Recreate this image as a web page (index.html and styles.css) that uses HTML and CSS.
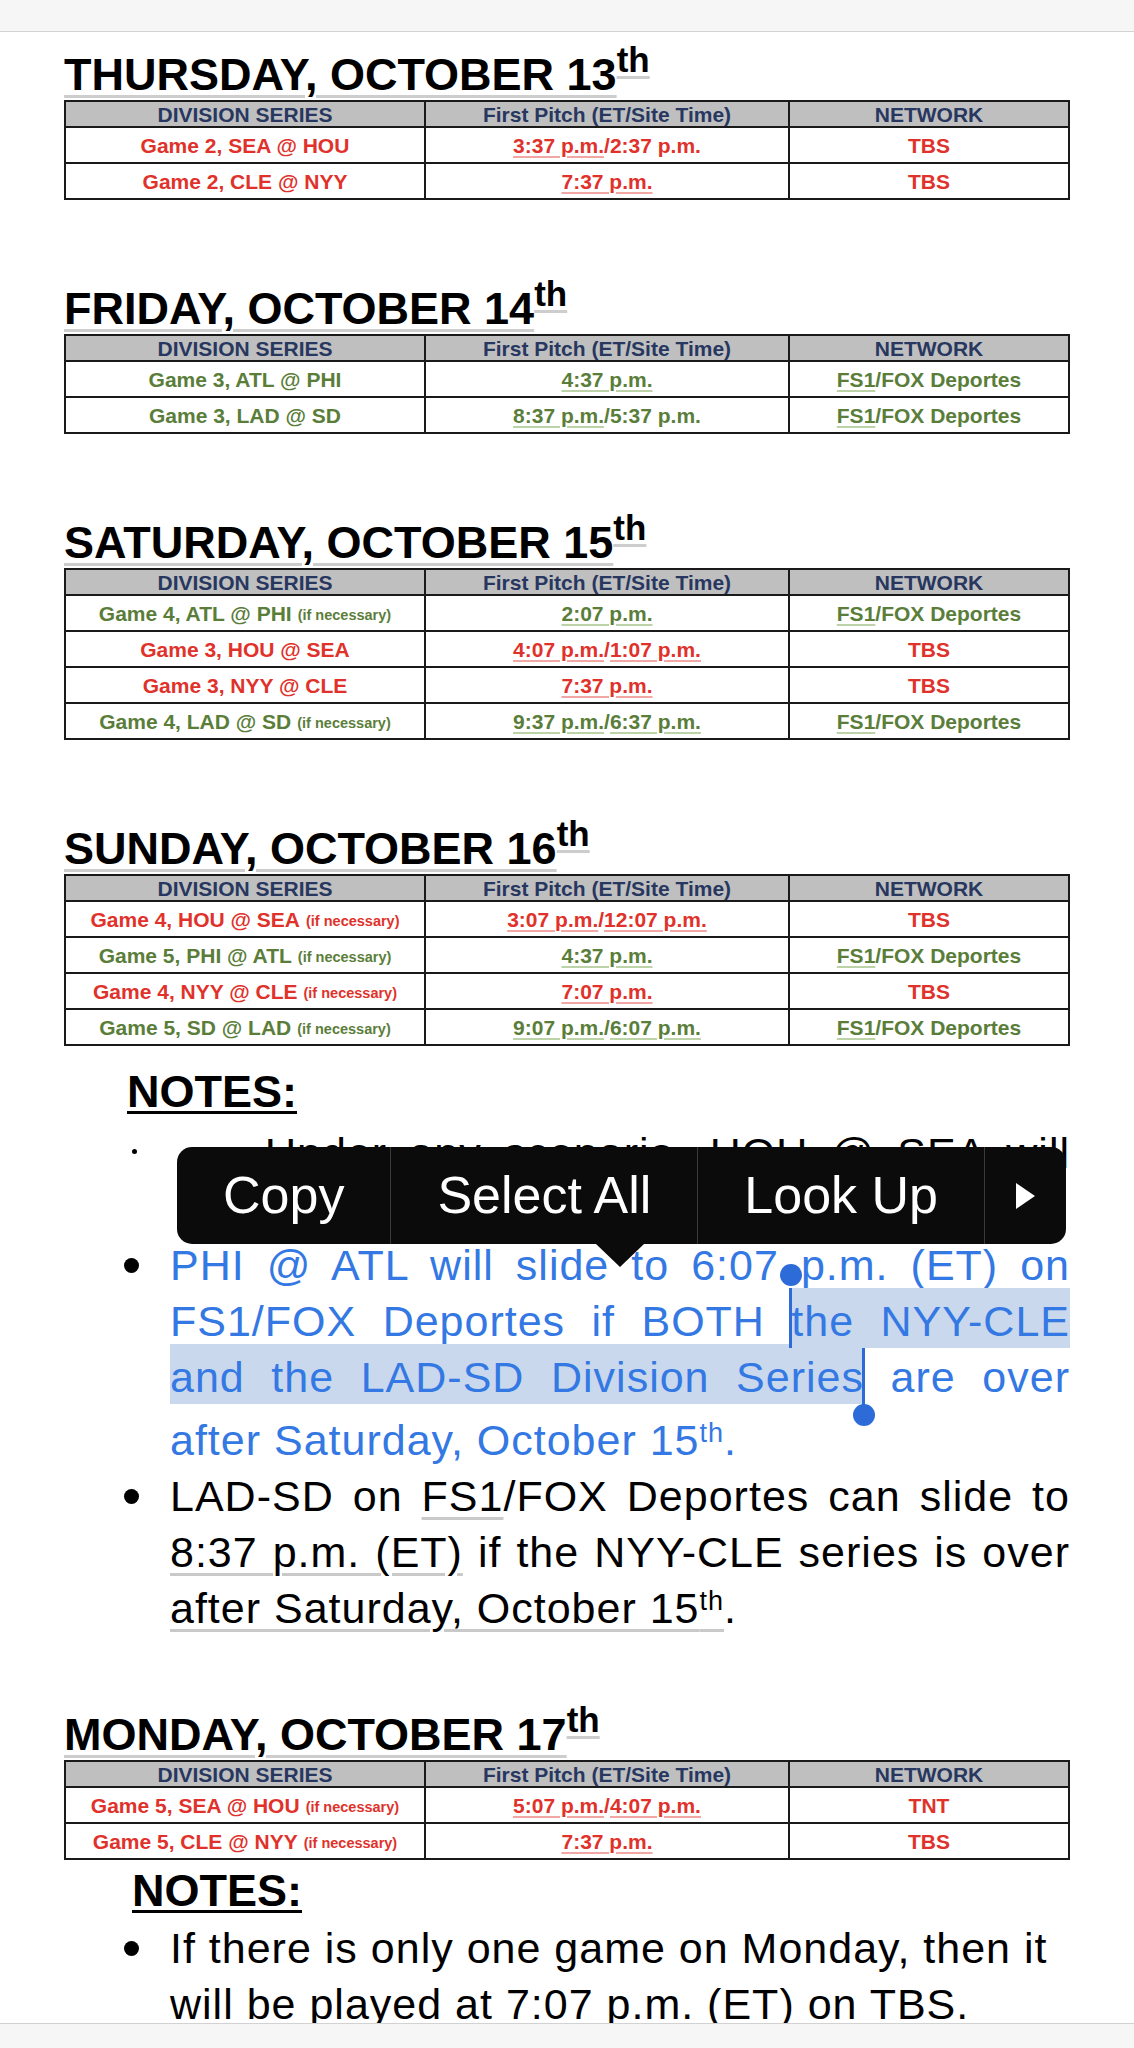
FILE: index.html
```html
<!DOCTYPE html>
<html lang="en">
<head>
<meta charset="utf-8">
<title>Division Series Schedule</title>
<link rel="stylesheet" href="styles.css">
</head>
<body>
<div class="topbar"></div>
<main class="doc">

  <section class="day">
    <h2 class="day-title"><span class="dt">THURSDAY, OCTOBER 13</span><sup class="ord">th</sup></h2>
    <div class="sched">
      <div class="hd">DIVISION SERIES</div><div class="hd">First Pitch (ET/Site Time)</div><div class="hd">NETWORK</div>
      <div class="c red">Game 2, SEA @ HOU</div><div class="c red"><span class="dl">3:37 p.m.</span>/2:37 p.m.</div><div class="c red">TBS</div>
      <div class="c red">Game 2, CLE @ NYY</div><div class="c red"><span class="dl">7:37 p.m.</span></div><div class="c red">TBS</div>
    </div>
  </section>

  <section class="day">
    <h2 class="day-title"><span class="dt">FRIDAY, OCTOBER 14</span><sup class="ord">th</sup></h2>
    <div class="sched">
      <div class="hd">DIVISION SERIES</div><div class="hd">First Pitch (ET/Site Time)</div><div class="hd">NETWORK</div>
      <div class="c green">Game 3, ATL @ PHI</div><div class="c green"><span class="dl">4:37 p.m.</span></div><div class="c green"><span class="dl">FS1</span>/FOX Deportes</div>
      <div class="c green">Game 3, LAD @ SD</div><div class="c green"><span class="dl">8:37 p.m.</span>/5:37 p.m.</div><div class="c green"><span class="dl">FS1</span>/FOX Deportes</div>
    </div>
  </section>

  <section class="day">
    <h2 class="day-title"><span class="dt">SATURDAY, OCTOBER 15</span><sup class="ord">th</sup></h2>
    <div class="sched">
      <div class="hd">DIVISION SERIES</div><div class="hd">First Pitch (ET/Site Time)</div><div class="hd">NETWORK</div>
      <div class="c green">Game 4, ATL @ PHI<small class="ifn">(if necessary)</small></div><div class="c green"><span class="dl">2:07 p.m.</span></div><div class="c green"><span class="dl">FS1</span>/FOX Deportes</div>
      <div class="c red">Game 3, HOU @ SEA</div><div class="c red"><span class="dl">4:07 p.m.</span>/<span class="dl">1:07 p.m.</span></div><div class="c red">TBS</div>
      <div class="c red">Game 3, NYY @ CLE</div><div class="c red"><span class="dl">7:37 p.m.</span></div><div class="c red">TBS</div>
      <div class="c green">Game 4, LAD @ SD<small class="ifn">(if necessary)</small></div><div class="c green"><span class="dl">9:37 p.m.</span>/<span class="dl">6:37 p.m.</span></div><div class="c green"><span class="dl">FS1</span>/FOX Deportes</div>
    </div>
  </section>

  <section class="day">
    <h2 class="day-title"><span class="dt">SUNDAY, OCTOBER 16</span><sup class="ord">th</sup></h2>
    <div class="sched">
      <div class="hd">DIVISION SERIES</div><div class="hd">First Pitch (ET/Site Time)</div><div class="hd">NETWORK</div>
      <div class="c red">Game 4, HOU @ SEA<small class="ifn">(if necessary)</small></div><div class="c red"><span class="dl">3:07 p.m.</span>/<span class="dl">12:07 p.m.</span></div><div class="c red">TBS</div>
      <div class="c green">Game 5, PHI @ ATL<small class="ifn">(if necessary)</small></div><div class="c green"><span class="dl">4:37 p.m.</span></div><div class="c green"><span class="dl">FS1</span>/FOX Deportes</div>
      <div class="c red">Game 4, NYY @ CLE<small class="ifn">(if necessary)</small></div><div class="c red"><span class="dl">7:07 p.m.</span></div><div class="c red">TBS</div>
      <div class="c green">Game 5, SD @ LAD<small class="ifn">(if necessary)</small></div><div class="c green"><span class="dl">9:07 p.m.</span>/<span class="dl">6:07 p.m.</span></div><div class="c green"><span class="dl">FS1</span>/FOX Deportes</div>
    </div>

    <div class="notes">
      <h3 class="notes-title">NOTES:</h3>
      <ul class="note-list">
        <li class="note tabbed">
          <span class="mark tiny"></span>
          <p class="body">
            <span class="ln">Under any scenario, HOU @ SEA will</span>
            <span class="ln end">be played at 4:07 p.m. (ET) on TBS.</span>
          </p>
        </li>
        <li class="note blue">
          <span class="mark"></span>
          <p class="body">
            <span class="ln">PHI @ ATL will slide to 6:07 p.m. (ET) on</span>
            <span class="ln">FS1/FOX Deportes if BOTH <span class="caret caret-start"></span><span class="sel">the NYY-CLE</span></span>
            <span class="ln"><span class="sel">and the LAD-SD Division Series</span><span class="caret caret-end"></span> are over</span>
            <span class="ln end tall">after Saturday, October 15<sup class="sup-sm">th</sup>.</span>
          </p>
        </li>
        <li class="note">
          <span class="mark"></span>
          <p class="body">
            <span class="ln">LAD-SD on <span class="ul">FS1</span>/FOX Deportes can slide to</span>
            <span class="ln"><span class="ul">8:37 p.m. (ET)</span> if the NYY-CLE series is over</span>
            <span class="ln end"><span class="ul">after Saturday, October 15<sup class="sup-sm">th</sup></span>.</span>
          </p>
        </li>
      </ul>

      <div class="menu">
        <span class="item">Copy</span>
        <span class="item">Select All</span>
        <span class="item">Look Up</span>
        <span class="item more"><svg width="23" height="28" viewBox="0 0 23 28" aria-hidden="true"><path d="M2 1 L21 14 L2 27 Z" fill="#ffffff"/></svg></span>
      </div>
    </div>
  </section>

  <section class="day after-notes">
    <h2 class="day-title"><span class="dt">MONDAY, OCTOBER 17</span><sup class="ord">th</sup></h2>
    <div class="sched">
      <div class="hd">DIVISION SERIES</div><div class="hd">First Pitch (ET/Site Time)</div><div class="hd">NETWORK</div>
      <div class="c red">Game 5, SEA @ HOU<small class="ifn">(if necessary)</small></div><div class="c red"><span class="dl">5:07 p.m.</span>/<span class="dl">4:07 p.m.</span></div><div class="c red">TNT</div>
      <div class="c red">Game 5, CLE @ NYY<small class="ifn">(if necessary)</small></div><div class="c red"><span class="dl">7:37 p.m.</span></div><div class="c red">TBS</div>
    </div>

    <div class="notes notes-mon">
      <h3 class="notes-title">NOTES:</h3>
      <ul class="note-list">
        <li class="note">
          <span class="mark"></span>
          <p class="body">
            <span class="ln end">If there is only one game on Monday, then it</span>
            <span class="ln end">will be played <span class="ul">at 7:07 p.m. (ET)</span> on TBS.</span>
          </p>
        </li>
      </ul>
    </div>
  </section>

</main>
<div class="bottombar"></div>
</body>
</html>
```

FILE: styles.css
```css
html, body {
  margin: 0;
  padding: 0;
  background: #ffffff;
}

body {
  font-family: "Liberation Sans", Arial, sans-serif;
  color: #000;
}

.topbar {
  height: 31px;
  background: #f6f6f6;
  border-bottom: 1px solid #d2d2d2;
}

.bottombar {
  position: fixed;
  left: 0;
  right: 0;
  bottom: 0;
  height: 24px;
  background: #f6f6f6;
  border-top: 1px solid #d2d2d2;
}

.doc {
  padding: 0 64px;
}

/* ---------- day sections ---------- */
.day {
  margin-top: 84px;
}

.day:first-child {
  margin-top: 18px;
}

.day.after-notes {
  margin-top: 74px;
}

.day-title {
  margin: 0;
  font-size: 45px;
  line-height: 50px;
  font-weight: bold;
  white-space: nowrap;
}

.dt {
  text-decoration: underline;
  text-decoration-color: #cdcdcd;
  text-decoration-thickness: 3px;
  text-underline-offset: 5px;
}

.ord {
  font-size: 35px;
  line-height: 0;
  vertical-align: 18px;
  text-decoration: underline;
  text-decoration-color: #cdcdcd;
  text-decoration-thickness: 3px;
  text-underline-offset: 4px;
}

/* ---------- schedule grid ---------- */
.sched {
  display: grid;
  grid-template-columns: 360px 364px 280px;
  width: 1006px;
  box-sizing: border-box;
  border-top: 2px solid #1a1a1a;
  border-left: 2px solid #1a1a1a;
}

.sched > div {
  box-sizing: border-box;
  border-right: 2px solid #1a1a1a;
  border-bottom: 2px solid #1a1a1a;
  display: flex;
  align-items: center;
  justify-content: center;
  font-weight: bold;
  white-space: nowrap;
}

.hd {
  height: 26px;
  background: #bfbfbf;
  color: #27375f;
  font-size: 21px;
  padding-top: 1px;
}

.c {
  height: 36px;
  font-size: 21px;
  padding-top: 1px;
}

.red {
  color: #e0322b;
}

.green {
  color: #5a7e3a;
}

.ifn {
  font-size: 14.5px;
  font-weight: bold;
  margin-left: 6px;
  padding-top: 3px;
}

.dl {
  text-decoration: underline;
  text-decoration-thickness: 2px;
  text-underline-offset: 3px;
}

.red .dl {
  text-decoration-color: #f1a7a4;
}

.green .dl {
  text-decoration-color: #bcd3a8;
}

/* ---------- notes ---------- */
.notes {
  position: relative;
}

.notes-title {
  margin: 17px 0 0 63px;
  font-size: 45px;
  line-height: 58px;
  font-weight: bold;
  text-decoration: underline;
  text-decoration-thickness: 3px;
  text-underline-offset: 4px;
}

.notes-mon .notes-title {
  margin: 2px 0 0 68px;
}

.note-list {
  list-style: none;
  margin: 4px 0 0;
  padding: 0;
}

.notes-mon .note-list {
  margin-top: 0;
}

.note {
  display: flex;
  font-size: 43px;
  line-height: 56px;
  letter-spacing: 1px;
}

.mark {
  flex: 0 0 106px;
  position: relative;
}

.mark::before {
  content: "";
  position: absolute;
  left: 60px;
  top: 21px;
  width: 15px;
  height: 15px;
  border-radius: 50%;
  background: #000;
}

.mark.tiny::before {
  left: 68px;
  top: 24px;
  width: 5px;
  height: 5px;
}

.body {
  flex: 0 0 900px;
  margin: 0;
}

.note.tabbed .mark {
  flex-basis: 201px;
}

.note.tabbed .body {
  flex-basis: 805px;
}

.ln {
  display: block;
  white-space: nowrap;
  text-align: justify;
  text-align-last: justify;
}

.ln.end {
  text-align-last: left;
}

.ln.tall {
  padding-top: 7px;
}

.blue {
  color: #3478e4;
}

.sel {
  background: #c9d8ec;
  padding: 9px 0 3px;
}

.sup-sm {
  font-size: 27px;
  line-height: 0;
  vertical-align: 13px;
}

.ul {
  text-decoration: underline;
  text-decoration-color: #c9c9c9;
  text-decoration-thickness: 3px;
  text-underline-offset: 6px;
}

/* selection handles */
.caret {
  display: inline-block;
  position: relative;
  width: 0;
  height: 0;
}

.caret::before,
.caret::after {
  content: "";
  position: absolute;
  background: #2d6cd8;
}

.caret::before {
  left: -2px;
  width: 3px;
}

.caret::after {
  left: -11px;
  width: 22px;
  height: 22px;
  border-radius: 50%;
}

.caret-start::before {
  top: -48px;
  height: 60px;
}

.caret-start::after {
  top: -72px;
}

.caret-end::before {
  top: -44px;
  height: 64px;
}

.caret-end::after {
  top: 12px;
}

/* edit menu */
.menu {
  position: absolute;
  left: 113px;
  top: 84px;
  height: 97px;
  display: flex;
  background: #0b0b0b;
  border-radius: 15px;
  color: #ffffff;
  font-size: 52px;
  line-height: 97px;
}

.menu::after {
  content: "";
  position: absolute;
  left: 419px;
  top: 97px;
  border-top: 23px solid #0b0b0b;
  border-left: 24px solid transparent;
  border-right: 24px solid transparent;
}

.item {
  padding: 0 46px;
  white-space: nowrap;
}

.item + .item {
  border-left: 1px solid #3a3a3a;
}

.item.more {
  padding: 0 29px;
  display: flex;
  align-items: center;
}
```
